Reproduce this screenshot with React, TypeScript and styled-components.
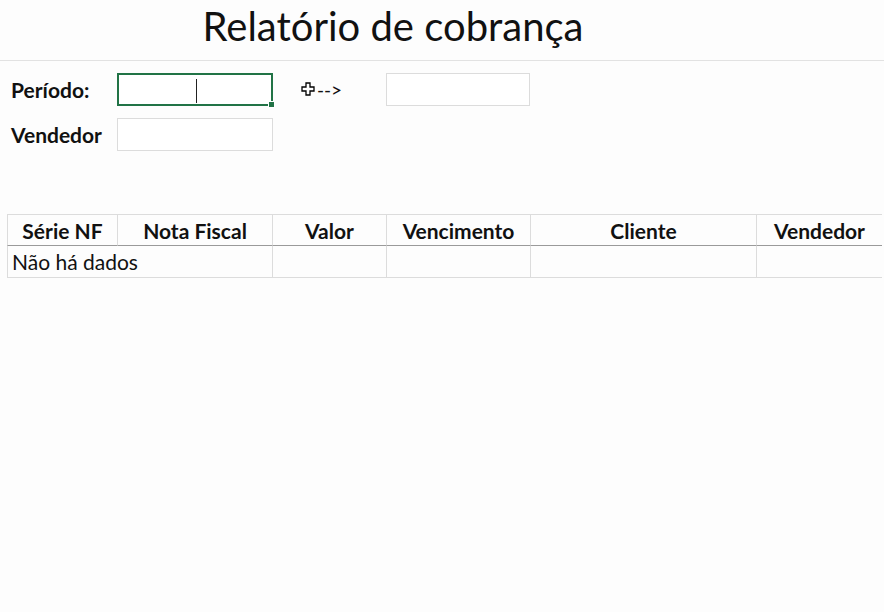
import React from "react";
import styled, { createGlobalStyle } from "styled-components";

const Global = createGlobalStyle`
  body { margin: 0; background: #fdfdfd; font-family: Lato, "Open Sans", sans-serif; color: #111; }
`;

const Page = styled.div`
  width: 884px;
  height: 612px;
  overflow: hidden;
  position: relative;
`;

const TitleBar = styled.div`
  height: 61px;
  box-sizing: border-box;
  border-bottom: 1px solid #e2e2e2;
  display: flex;
  align-items: center;
  justify-content: center;
  padding: 0 98px 8px 0;
  font-size: 40px;
`;

const Form = styled.div`
  display: grid;
  grid-template-columns: 117px 156px 113px 144px;
  grid-template-rows: 33px 33px;
  row-gap: 12px;
  padding-top: 12px;
  align-items: center;
`;

const Label = styled.div`
  font-weight: 700;
  font-size: 21px;
  padding-left: 11px;
`;

const Cell = styled.div<{ active?: boolean }>`
  height: 33px;
  box-sizing: border-box;
  border: ${(p) => (p.active ? "2px solid #217346" : "1px solid #dcdcdc")};
  background: #fff;
  position: relative;
`;

const Caret = styled.span`
  position: absolute;
  left: 77px;
  top: 4px;
  width: 1px;
  height: 24px;
  background: #222;
`;

const Handle = styled.span`
  position: absolute;
  right: -4px;
  bottom: -4px;
  width: 5px;
  height: 5px;
  background: #217346;
  border: 1px solid #fff;
`;

const Arrow = styled.div`
  font-size: 19px;
  padding-left: 28px;
  display: flex;
  align-items: center;
  gap: 1px;
`;

const Table = styled.div`
  margin: 63px 0 0 7px;
  display: grid;
  grid-template-columns: 110px 155px 114px 144px 226px 126px;
  width: 875px;
`;

const Head = styled.div`
  height: 32px;
  box-sizing: border-box;
  border-top: 1px solid #dcdcdc;
  border-left: 1px solid #dcdcdc;
  border-bottom: 1px solid #9a9a9a;
  display: flex;
  align-items: center;
  justify-content: center;
  font-weight: 700;
  font-size: 21px;
`;

const Data = styled.div`
  height: 32px;
  box-sizing: border-box;
  border-left: 1px solid #dcdcdc;
  border-bottom: 1px solid #dcdcdc;
  display: flex;
  align-items: center;
  padding-left: 4px;
  font-size: 21px;
  white-space: nowrap;
`;

const cols = ["Série NF", "Nota Fiscal", "Valor", "Vencimento", "Cliente", "Vendedor"];

export default function App() {
  return (
    <Page>
      <Global />
      <TitleBar>Relatório de cobrança</TitleBar>
      <Form>
        <Label>Período:</Label>
        <Cell active>
          <Caret />
          <Handle />
        </Cell>
        <Arrow>
          <svg width="15" height="15" viewBox="0 0 15 15">
            <path d="M5 1h4v4h4v4H9v4H5V9H1V5h4z" fill="#fff" stroke="#000" strokeWidth="1.3" />
          </svg>
          <span>--&gt;</span>
        </Arrow>
        <Cell />
        <Label>Vendedor</Label>
        <Cell />
      </Form>
      <Table>
        {cols.map((c) => (
          <Head key={c}>{c}</Head>
        ))}
        <Data style={{ gridColumn: "span 2" }}>Não há dados</Data>
        <Data />
        <Data />
        <Data />
        <Data />
      </Table>
    </Page>
  );
}
